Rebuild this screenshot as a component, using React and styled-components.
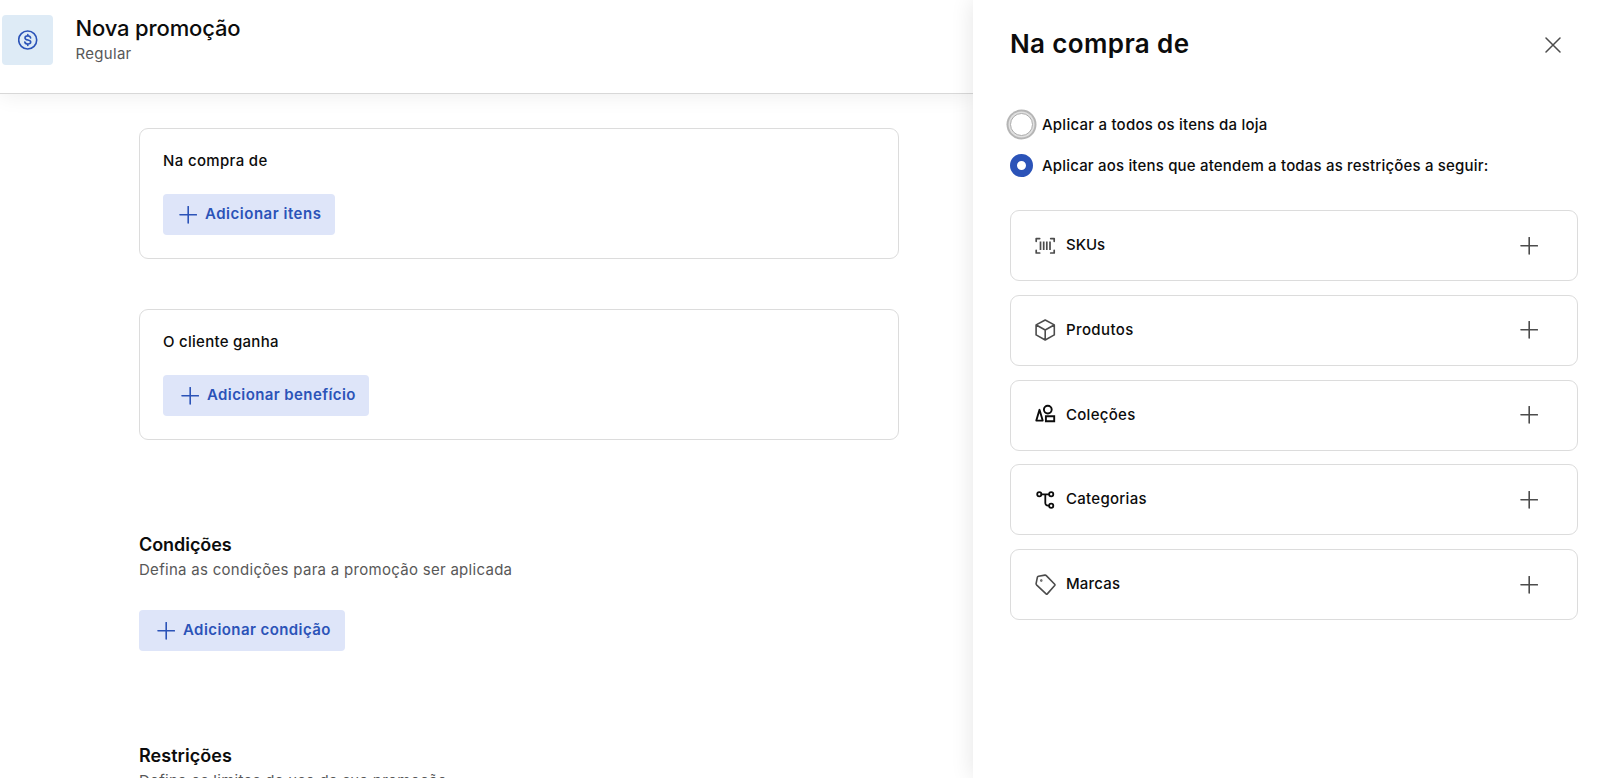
import React, { useState } from 'react';
import styled, { createGlobalStyle, css, ThemeProvider } from 'styled-components';

const theme = {
  colors: {
    text: '#0c0c0c',
    muted: '#585858',
    icon: '#4c4c4c',
    accent: '#2b53b8',
    accentLight: '#dee5f9',
    badge: '#deebf6',
    border: '#dcdcdc'
  }
};

const GlobalStyle = createGlobalStyle`
  * {
    box-sizing: border-box;
  }

  body {
    margin: 0;
    overflow: hidden;
    background: #fff;
    font-family: Inter, 'Liberation Sans', sans-serif;
    font-size: 15px;
    color: #0c0c0c;
  }
`

const Screen = styled.div`
  display: grid;
  grid-template-columns: 973px 627px;
  width: 1600px;
  height: 778px;
  overflow: hidden;
`

const Page = styled.main`
  min-width: 0;
  overflow: hidden;
`

const Header = styled.header`
  display: flex;
  height: 94px;
  padding: 15px 0 0 2px;
  border-bottom: 1px solid #d8d8d8;
  box-shadow: 0 2px 20px rgba(0, 0, 0, 0.07);
`

const Badge = styled.div`
  display: flex;
  align-items: center;
  justify-content: center;
  width: 51px;
  height: 50px;
  margin-right: 22.5px;
  border-radius: 4px;
  background: ${props => props.theme.colors.badge};
  color: ${props => props.theme.colors.accent};
`

const Label = styled.span`
  display: block;
  white-space: nowrap;
  font-size: 15px;
  line-height: 24px;
  font-weight: 500;
  letter-spacing: ${props => props.$spacing || 0}px;
`

const PageTitle = styled.h1`
  margin: 0;
  font-size: 22px;
  line-height: 27px;
  font-weight: 500;
  letter-spacing: -0.15px;
`

const Muted = styled(Label)`
  font-weight: 400;
  color: ${props => props.theme.colors.muted};
`

const Content = styled.div`
  display: flex;
  flex-direction: column;
  align-items: flex-start;
  padding: 34px 0 0 139px;
`

const Card = styled.section`
  width: 760px;
  height: 131px;
  margin-bottom: 50px;
  padding: 20px 23px;
  border: 1px solid ${props => props.theme.colors.border};
  border-radius: 9px;
`

const AddButton = styled.button`
  display: flex;
  align-items: center;
  width: ${props => props.$width}px;
  height: 41px;
  padding: 0 0 0 ${props => props.$inset}px;
  border: 0;
  border-radius: 4px;
  background: ${props => props.theme.colors.accentLight};
  color: ${props => props.theme.colors.accent};
  font-family: inherit;

  ${Label} {
    padding-bottom: 2px;
    font-weight: 600;
  }

  svg {
    margin-right: 8px;
  }
`

const CardButton = styled(AddButton)`
  margin-top: 21px;
`

const Section = styled.section`
  height: 211px;

  ${AddButton} {
    margin-top: 28px;
  }
`

const Sections = styled.div`
  padding-top: 42px;
`

const SectionTitle = styled.h2`
  margin: 0;
  font-size: 18px;
  line-height: 26px;
  font-weight: 600;
  letter-spacing: ${props => props.$spacing || 0}px;
`

const Drawer = styled.aside`
  position: relative;
  padding: 28px 22px 0 37px;
  background: #fff;
  box-shadow: 0 0 22px rgba(0, 0, 0, 0.11);
`

const DrawerHeader = styled.div`
  display: flex;
  align-items: center;
  justify-content: space-between;
  height: 32px;
  padding-right: 17px;
  color: ${props => props.theme.colors.icon};

  svg {
    margin-top: 1px;
  }
`

const DrawerTitle = styled.h2`
  margin: 0;
  font-size: 26px;
  line-height: 32px;
  font-weight: 600;
  letter-spacing: 0.37px;
  color: ${props => props.theme.colors.text};
`

const Options = styled.div`
  display: flex;
  flex-direction: column;
  gap: 17px;
  padding-top: 53px;
`

const Option = styled.label`
  display: flex;
  align-items: center;
  height: 24px;
  gap: 9px;
`

const Radio = styled.input`
  appearance: none;
  flex: none;
  width: 23px;
  height: 23px;
  margin: 0 0 1px;
  border: 1.5px solid #ababab;
  border-radius: 50%;
  background: #fff;

  ${({ $focused }) =>
    $focused && css`
      box-shadow: 0 0 0 1.5px #e0e0e0, 0 0 0 3.5px #b5b5b5;
  `}

  &:checked {
    border: 7px solid ${props => props.theme.colors.accent};
  }
`

const Restrictions = styled.div`
  display: flex;
  flex-direction: column;
  gap: 13.8px;
  margin-top: 32px;
`

const Restriction = styled.div`
  display: flex;
  align-items: center;
  justify-content: space-between;
  height: 71px;
  padding: 0 39px 0 24px;
  border: 1px solid ${props => props.theme.colors.border};
  border-radius: 9px;
  color: ${props => props.theme.colors.icon};
`

const RestrictionName = styled.div`
  display: flex;
  align-items: center;
  gap: 10px;

  ${Label} {
    padding-bottom: 1px;
    color: ${props => props.theme.colors.text};
  }
`

function Plus() {
  return (
    <svg width="18" height="18" viewBox="0 0 18 18" fill="none" stroke="currentColor" strokeWidth="1.6" strokeLinecap="round">
      <path d="M9.200 .6v16.400M1 8.800h16.400" />
    </svg>
  );
}

function Close() {
  return (
    <svg width="16" height="16" viewBox="0 0 16 16" fill="none" stroke="currentColor" strokeWidth="1.5" strokeLinecap="round">
      <path d="M1 1l14 14M15 1L1 15" />
    </svg>
  );
}

function Coin() {
  return (
    <svg width="20" height="20" viewBox="0 0 20 20" fill="none" stroke="currentColor" strokeWidth="1.6" strokeLinecap="round">
      <circle cx="9.700" cy="10" r="9" />
      <path d="M9.800 4.500v1.400M9.800 14v1.500M12.600 7.900c-.3-1.300-1.300-2-2.800-2-1.700 0-2.800.8-2.800 2 0 2.900 5.700 1.300 5.700 4.100 0 1.200-1.200 2-2.900 2-1.600 0-2.700-.7-3-2" />
    </svg>
  );
}

const icons = {
  sku: (
    <g strokeWidth="1.700">
      <path d="M1.200 6.300V3.600h3.500M15.700 3.600h3.500v2.700M19.200 15.300v2.700h-3.500M4.700 18H1.200v-2.700" />
      <path d="M5.500 6.600v8.400M8.700 6.600v8.400M11.800 6.600v8.400M15 6.600v8.400" strokeLinecap="butt" />
    </g>
  ),
  box: (
    <path strokeWidth="1.600" d="M10.200 1l9.100 4.900v10L10.200 21l-9.100-5.100v-10L10.200 1zM1.300 6l8.900 5 8.900-5M10.200 11v9.900" />
  ),
  shapes: (
    <g strokeWidth="1.900" stroke="#0c0c0c">
      <path d="M4.500 5.800L7.700 16.600H1.300L4.500 5.800z" />
      <circle cx="12.800" cy="5.600" r="3.900" />
      <path d="M10.900 12.300h8.300v5h-8.300z" strokeLinejoin="miter" />
    </g>
  ),
  tree: (
    <g strokeWidth="1.800" stroke="#0c0c0c">
      <circle cx="4.300" cy="5.300" r="2.100" />
      <circle cx="16.200" cy="5.300" r="2.100" />
      <circle cx="16.200" cy="16.700" r="2.100" />
      <path d="M6.400 5.300H14M10.300 5.300v8.800a2.600 2.600 0 002.600 2.600H14" />
    </g>
  ),
  tag: (
    <g strokeWidth="1.600">
      <path d="M3.500 2.200L9.900 1.100Q10.700 1 11.300 1.600L19.700 10.300Q20.200 10.900 19.700 11.500L12.300 19.900Q11.700 20.500 11.100 19.900L1.500 10.800Q1 10.300 1.100 9.600L2.400 3.200Q2.600 2.400 3.500 2.200z" />
      <circle cx="6.300" cy="6.500" r=".4" fill="currentColor" />
    </g>
  )
};

function Icon({ name }) {
  return (
    <svg width="21" height="22" viewBox="0 0 21 22" fill="none" stroke="currentColor" strokeLinecap="round" strokeLinejoin="round">
      {icons[name]}
    </svg>
  );
}

const restrictions = [
  { name: 'SKUs', icon: 'sku', spacing: 0 },
  { name: 'Produtos', icon: 'box', spacing: 0.38 },
  { name: 'Coleções', icon: 'shapes', spacing: 0.28 },
  { name: 'Categorias', icon: 'tree', spacing: 0.28 },
  { name: 'Marcas', icon: 'tag', spacing: 0.17 }
];

function App() {
  const [scope, setScope] = useState('restricted');

  return (
    <ThemeProvider theme={theme}>
      <GlobalStyle />
      <Screen>
        <Page>
          <Header>
            <Badge><Coin /></Badge>
            <div>
              <PageTitle>Nova promoção</PageTitle>
              <Muted $spacing={0.3}>Regular</Muted>
            </div>
          </Header>
          <Content>
            <Card>
              <Label $spacing={0.34}>Na compra de</Label>
              <CardButton $width={172} $inset={16}>
                <Plus />
                <Label $spacing={0.52}>Adicionar itens</Label>
              </CardButton>
            </Card>
            <Card>
              <Label $spacing={0.27}>O cliente ganha</Label>
              <CardButton $width={206} $inset={18}>
                <Plus />
                <Label $spacing={0.4}>Adicionar benefício</Label>
              </CardButton>
            </Card>
            <Sections>
              <Section>
                <SectionTitle $spacing={-0.05}>Condições</SectionTitle>
                <Muted $spacing={0.29}>Defina as condições para a promoção ser aplicada</Muted>
                <AddButton $width={206} $inset={18}>
                  <Plus />
                  <Label $spacing={0.42}>Adicionar condição</Label>
                </AddButton>
              </Section>
              <Section>
                <SectionTitle $spacing={0.05}>Restrições</SectionTitle>
                <Muted $spacing={0.29}>Defina os limites de uso da sua promoção</Muted>
              </Section>
            </Sections>
          </Content>
        </Page>
        <Drawer>
          <DrawerHeader>
            <DrawerTitle>Na compra de</DrawerTitle>
            <Close />
          </DrawerHeader>
          <Options>
            <Option>
              <Radio type="radio" name="scope" $focused checked={scope === 'all'} onChange={() => setScope('all')} />
              <Label $spacing={0.23}>Aplicar a todos os itens da loja</Label>
            </Option>
            <Option>
              <Radio type="radio" name="scope" checked={scope === 'restricted'} onChange={() => setScope('restricted')} />
              <Label $spacing={0.18}>Aplicar aos itens que atendem a todas as restrições a seguir:</Label>
            </Option>
          </Options>
          <Restrictions>
            {restrictions.map(item => (
              <Restriction key={item.name}>
                <RestrictionName>
                  <Icon name={item.icon} />
                  <Label $spacing={item.spacing}>{item.name}</Label>
                </RestrictionName>
                <Plus />
              </Restriction>
            ))}
          </Restrictions>
        </Drawer>
      </Screen>
    </ThemeProvider>
  );
}

export default App;
